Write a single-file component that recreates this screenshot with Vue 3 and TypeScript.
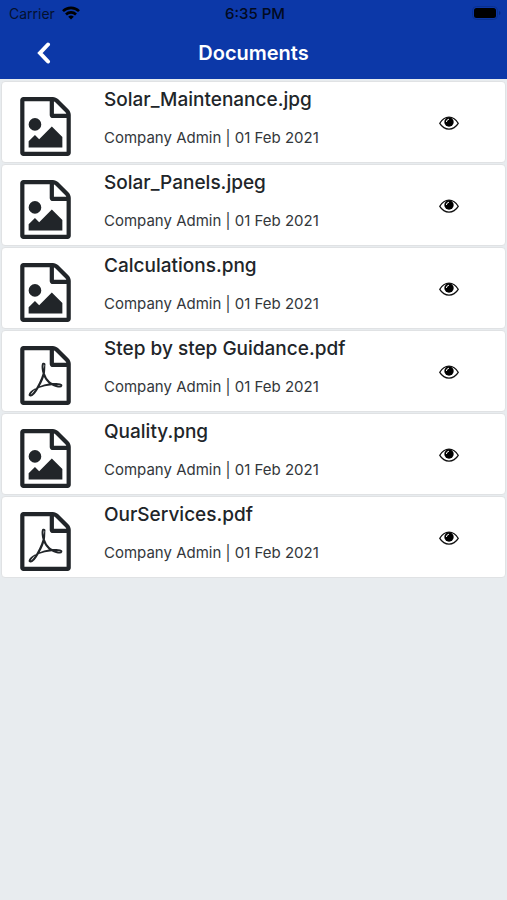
<script setup lang="ts">
interface DocumentItem {
  name: string
  kind: 'image' | 'pdf'
  author: string
  date: string
}

const make = (name: string, kind: DocumentItem['kind']): DocumentItem => ({
  name,
  kind,
  author: 'Company Admin',
  date: '01 Feb 2021',
})

const documents: DocumentItem[] = [
  make('Solar_Maintenance.jpg', 'image'),
  make('Solar_Panels.jpeg', 'image'),
  make('Calculations.png', 'image'),
  make('Step by step Guidance.pdf', 'pdf'),
  make('Quality.png', 'image'),
  make('OurServices.pdf', 'pdf'),
]

const sheet =
  'M1468 380q28 28 48 76t20 88v1152q0 40-28 68t-68 28H96q-40 0-68-28t-28-68V96q0-40 28-68T96 0h896q40 0 88 20t76 48zm-444-244v376h376q-10-29-22-41l-313-313q-12-12-41-22zm384 1528V640H992q-40 0-68-28t-28-68V128H128v1536h1280z'

const glyphs: Record<DocumentItem['kind'], string> = {
  image:
    'M1280 1216v320H256v-192l192-192 128 128 384-384zM448 1024q-80 0-136-56t-56-136 56-136 136-56 136 56 56 136-56 136-136 56z',
  pdf: 'M894 1071q33 26 84 56 59-7 117-7 147 0 177 49 16 22 2 52 0 1-1 2l-2 2v1q-6 38-71 38-48 0-115-20t-130-53q-221 24-392 83-153 262-242 262-15 0-28-7l-24-12q-1-1-6-5-10-10-6-36 9-40 56-91.5t132-96.5q14-9 23 6 2 2 2 4 52-85 107-197 68-136 104-262-24-82-30.5-159.5T657 552q11-40 42-40h22q23 0 35 15 18 21 9 68-2 6-4 8 1 3 1 8v30q-2 123-14 192 55 164 146 238zm-576 411q52-24 137-158-51 40-87.5 84t-49.5 74zm398-920q-15 42-2 132 1-7 7-44 0-3 7-43 1-4 4-8-1-1-1-2t-1-2q-1-1-1-2-1-22-13-36 0 1-1 2v3zm-124 661q135-54 284-81-2-1-13-9.5t-16-13.5q-76-67-127-176-27 86-83 197-30 56-45 83zm646-16q-24-24-140-24 76 28 124 28 14 0 18-1 0-1-2-3z',
}
</script>

<template>
  <div class="screen">
    <header class="top">
      <div class="status">
        <div class="carrier">
          <span>Carrier</span>
          <svg class="wifi" viewBox="0 0 18 14" aria-hidden="true">
            <g fill="none" stroke="#000" stroke-width="2.6">
              <path d="M1 5.2a11.3 11.3 0 0 1 16 0" />
              <path d="M4 8.5a7 7 0 0 1 10 0" />
            </g>
            <path d="M9 13.6 6.2 10.8a4 4 0 0 1 5.6 0z" />
          </svg>
        </div>
        <div class="clock">6:35 PM</div>
        <svg class="battery" viewBox="0 0 29 14" aria-hidden="true">
          <rect x="0.5" y="0.5" width="25" height="13" rx="4" fill="none" stroke="#09308f" />
          <rect x="2" y="2" width="22" height="10" rx="2.5" />
          <path d="M27 5v4q1.5-.5 1.500-2T27 5z" fill="#072a80" />
        </svg>
      </div>
      <div class="bar">
        <button class="back" type="button" aria-label="Back">
          <svg viewBox="0 0 14 22" aria-hidden="true">
            <path d="M11 2.500 3 11l8 8.500" fill="none" stroke="#fff" stroke-width="4" stroke-linecap="round" stroke-linejoin="miter" />
          </svg>
        </button>
        <h1>Documents</h1>
      </div>
    </header>

    <ul class="list">
      <li v-for="doc in documents" :key="doc.name" class="card">
        <svg class="file" viewBox="0 0 1536 1792" aria-hidden="true">
          <path :d="sheet" />
          <path :d="glyphs[doc.kind]" />
        </svg>
        <div class="info">
          <h2>{{ doc.name }}</h2>
          <p>{{ doc.author }} | {{ doc.date }}</p>
        </div>
        <button class="view" type="button" :aria-label="`View ${doc.name}`">
          <svg viewBox="0 0 20 14" aria-hidden="true">
            <path d="M.8 7.300C5.500-1 14.500-1 19.200 7.300 14.500 15 5.500 15 .8 7.300z" fill="#fff" stroke="#111" stroke-width="1.300" />
            <circle cx="10" cy="6" r="4.700" />
            <path d="M7.400 5.600q.2-2 2.200-2.400" fill="none" stroke="#fff" stroke-width="1" stroke-linecap="round" />
          </svg>
        </button>
      </li>
    </ul>
  </div>
</template>

<style>
body {
  background: #e8ecef;
}
</style>

<style scoped>
.screen {
  min-height: 100vh;
  background: #e8ecef;
  color: #212529;
  font-family: Inter, "Liberation Sans", sans-serif;
}

.top {
  background: #0c38a8;
}

.status {
  display: grid;
  grid-template-columns: 1fr auto 1fr;
  align-items: center;
  height: 26px;
  padding: 0 6px 0 9px;
  color: #04112f;
  font-size: 14px;
}

.carrier {
  display: flex;
  align-items: center;
  gap: 7px;
}

.wifi {
  width: 18px;
  height: 14px;
}

.clock {
  color: #020a20;
  font-size: 15px;
  font-weight: 500;
}

.battery {
  justify-self: end;
  width: 29px;
  height: 14px;
}

.bar {
  display: grid;
  grid-template-columns: 88px 1fr 88px;
  align-items: center;
  height: 53px;
}

.back,
.view {
  display: flex;
  align-items: center;
  justify-content: center;
  padding: 0;
  border: 0;
  background: none;
  cursor: pointer;
}

.back {
  height: 48px;
}

.back svg {
  width: 14px;
  height: 22px;
}

h1 {
  margin: 0;
  color: #fff;
  font-size: 20px;
  font-weight: 600;
  line-height: 24px;
  text-align: center;
}

.list {
  display: flex;
  flex-direction: column;
  gap: 1px;
  margin: 0;
  padding: 2px 1px;
  list-style: none;
}

.card {
  display: grid;
  grid-template-columns: 84px 1fr 112px;
  box-sizing: border-box;
  height: 82px;
  padding-left: 18px;
  border: 1px solid #e0e2e4;
  border-radius: 4px;
  background: #fff;
}

.file {
  width: 51px;
  height: 59px;
  margin-top: 15px;
  fill: #212529;
}

h2 {
  margin: 6px 0 0;
  font-size: 19px;
  font-weight: 500;
  line-height: 24px;
}

p {
  margin: 16px 0 0;
  color: #33373b;
  font-size: 15px;
  line-height: 20px;
}

.view {
  height: 82px;
}

.view svg {
  width: 20px;
  height: 14px;
}
</style>
